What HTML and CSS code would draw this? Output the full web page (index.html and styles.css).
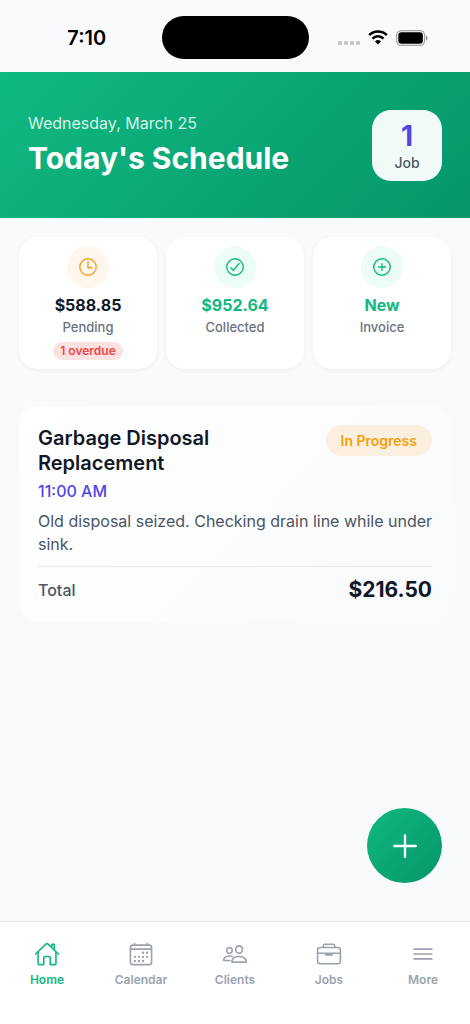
FILE: index.html
```html
<!DOCTYPE html>
<html lang="en">
<head>
<meta charset="utf-8">
<meta name="viewport" content="width=device-width, initial-scale=1">
<title>Today's Schedule</title>
<link rel="stylesheet" href="styles.css">
</head>
<body>
<div class="app">
  <div class="status-bar">
    <time class="clock">7:10</time>
    <div class="island"></div>
    <div class="indicators">
      <span class="signal"><i></i><i></i><i></i><i></i></span>
      <svg class="wifi" viewBox="0 0 20 15" aria-label="Wi-Fi">
        <path d="M1.2 5.2a12.400 12.400 0 0 1 17.600 0" fill="none" stroke="#000" stroke-width="2.6"/>
        <path d="M4.500 8.600a7.800 7.800 0 0 1 11 0" fill="none" stroke="#000" stroke-width="2.5"/>
        <path d="M10 14.6 7 11.5a4.3 4.3 0 0 1 6 0z"/>
      </svg>
      <svg class="battery" viewBox="0 0 32 16" aria-label="Battery">
        <rect x="0.6" y="0.6" width="28" height="14.8" rx="4.6" fill="none" stroke="#a3a0a6" stroke-width="1.2"/>
        <rect x="2.3" y="2.3" width="24.6" height="11.4" rx="3.2"/>
        <path d="M30 5.5c2 .8 2 4.2 0 5z" fill="#8f8c92"/>
      </svg>
    </div>
  </div>

  <header class="hero">
    <div class="hero-text">
      <p class="date">Wednesday, March 25</p>
      <h1 class="title">Today's Schedule</h1>
    </div>
    <div class="job-count">
      <strong class="job-number">1</strong>
      <span class="job-label">Job</span>
    </div>
  </header>

  <main class="content">
    <section class="stats">
      <button class="stat" type="button">
        <span class="stat-icon amber">
          <svg viewBox="0 0 512 512"><path d="M256 64C150 64 64 150 64 256s86 192 192 192 192-86 192-192S362 64 256 64z"/><path d="M256 128v144h96"/></svg>
        </span>
        <span class="stat-value">$588.85</span>
        <span class="stat-label">Pending</span>
        <span class="overdue">1 overdue</span>
      </button>
      <button class="stat" type="button">
        <span class="stat-icon green">
          <svg viewBox="0 0 512 512"><path d="M448 256c0-106-86-192-192-192S64 150 64 256s86 192 192 192 192-86 192-192z"/><path d="M352 176 217.600 336 160 272"/></svg>
        </span>
        <span class="stat-value positive">$952.64</span>
        <span class="stat-label">Collected</span>
      </button>
      <button class="stat" type="button">
        <span class="stat-icon green">
          <svg viewBox="0 0 512 512"><path d="M448 256c0-106-86-192-192-192S64 150 64 256s86 192 192 192 192-86 192-192z"/><path d="M256 176v160M336 256H176"/></svg>
        </span>
        <span class="stat-value positive">New</span>
        <span class="stat-label">Invoice</span>
      </button>
    </section>

    <article class="job">
      <div class="job-head">
        <div class="job-heading">
          <h2 class="job-title">Garbage Disposal Replacement</h2>
          <time class="job-time">11:00 AM</time>
        </div>
        <span class="job-status">In Progress</span>
      </div>
      <p class="job-note">Old disposal seized. Checking drain line while under sink.</p>
      <div class="job-total">
        <span class="total-label">Total</span>
        <strong class="total-value">$216.50</strong>
      </div>
    </article>
  </main>

  <button class="fab" type="button" aria-label="Add job">
    <svg viewBox="0 0 512 512"><path d="M256 112v288M400 256H112"/></svg>
  </button>

  <nav class="tabs">
    <a class="tab active" href="#home">
      <svg viewBox="0 0 512 512"><path d="M80 212v236a16 16 0 0 0 16 16h96V328a24 24 0 0 1 24-24h80a24 24 0 0 1 24 24v136h96a16 16 0 0 0 16-16V212"/><path d="M480 256 266.890 52c-5-5.280-16.690-5.340-21.780 0L32 256M400 179V64h-48v69"/></svg>
      Home
    </a>
    <a class="tab" href="#calendar">
      <svg viewBox="0 0 512 512"><rect x="48" y="80" width="416" height="384" rx="48"/><path d="M128 48v32M384 48v32M464 160H48"/><g class="dots"><circle cx="296" cy="232" r="24"/><circle cx="376" cy="232" r="24"/><circle cx="296" cy="312" r="24"/><circle cx="376" cy="312" r="24"/><circle cx="136" cy="312" r="24"/><circle cx="216" cy="312" r="24"/><circle cx="136" cy="392" r="24"/><circle cx="216" cy="392" r="24"/><circle cx="296" cy="392" r="24"/></g></svg>
      Calendar
    </a>
    <a class="tab" href="#clients">
      <svg viewBox="0 0 512 512"><path d="M402 168c-2.930 40.670-33.100 72-66 72s-63.120-31.320-66-72c-3-42.310 26.370-72 66-72s69 30.460 66 72z"/><path d="M336 304c-65.170 0-127.840 32.370-143.540 95.410-2.080 8.340 3.150 16.590 11.720 16.590h263.650c8.570 0 13.770-8.250 11.720-16.590C463.850 335.360 401.180 304 336 304z"/><path d="M200 185.940c-2.340 32.480-26.720 58.060-53 58.060s-50.700-25.570-53-58.060C91.610 152.150 115.340 128 147 128s55.390 24.770 53 57.940z"/><path d="M206 306c-18.050-8.270-37.930-11.450-59-11.450-52 0-102.100 25.850-114.650 76.200-1.650 6.660 2.530 13.250 9.370 13.250H154"/></svg>
      Clients
    </a>
    <a class="tab" href="#jobs">
      <svg viewBox="0 0 512 512"><rect x="32" y="128" width="448" height="320" rx="48"/><path d="M144 128V96a32 32 0 0 1 32-32h160a32 32 0 0 1 32 32v32M480 240H32M320 240v24a8 8 0 0 1-8 8H200a8 8 0 0 1-8-8v-24"/></svg>
      Jobs
    </a>
    <a class="tab" href="#more">
      <svg viewBox="0 0 512 512"><path d="M80 160h352M80 256h352M80 352h352"/></svg>
      More
    </a>
  </nav>
</div>
</body>
</html>
```

FILE: styles.css
```css
* {
  box-sizing: border-box;
}

body {
  margin: 0;
  background: #f9fafc;
  color: #111827;
  font-family: Inter, "Liberation Sans", sans-serif;
}

h1,
h2,
p {
  margin: 0;
}

button {
  border: 0;
  font: inherit;
  color: inherit;
}

svg {
  flex: none;
}

.app {
  position: relative;
  display: flex;
  flex-direction: column;
  min-height: 100vh;
}

.status-bar {
  display: grid;
  grid-template-columns: 1fr 147px 1fr;
  align-items: center;
  height: 72px;
  padding-top: 3px;
}

.clock {
  padding-top: 1px;
  padding-left: 12px;
  color: #000;
  font-size: 20px;
  font-weight: 600;
  text-align: center;
}

.island {
  height: 43px;
  border-radius: 22px;
  background: #000;
}

.indicators {
  display: flex;
  align-items: center;
  justify-content: center;
  gap: 8px;
  padding-right: 12px;
}

.signal {
  display: flex;
  gap: 2px;
  padding-top: 10px;
}

.signal i {
  width: 4px;
  height: 4px;
  border-radius: 1px;
  background: #c8c8cb;
}

.wifi {
  width: 20px;
  height: 15px;
}

.battery {
  width: 32px;
  height: 16px;
}

.hero {
  display: flex;
  align-items: center;
  justify-content: space-between;
  height: 146px;
  padding: 0 28px;
  background: linear-gradient(135deg, #10b981, #059669);
  color: #fff;
}

.date {
  color: rgba(255, 255, 255, 0.85);
  font-size: 16px;
  line-height: 20px;
}

.title {
  padding-top: 5px;
  font-size: 30px;
  line-height: 40px;
  font-weight: 700;
}

.job-count {
  display: flex;
  flex-direction: column;
  align-items: center;
  justify-content: center;
  width: 70px;
  height: 71px;
  padding-top: 2px;
  border-radius: 19px;
  background: rgba(255, 255, 255, 0.95);
}

.job-number {
  color: #4f46e5;
  font-size: 28px;
  line-height: 34px;
  font-weight: 700;
}

.job-label {
  color: #4b5563;
  font-size: 14px;
  line-height: 20px;
  font-weight: 500;
}

.content {
  display: flex;
  flex: 1;
  flex-direction: column;
  gap: 37px;
  padding: 19px;
}

.stats {
  display: grid;
  grid-template-columns: repeat(3, 1fr);
  gap: 9px;
}

.stat {
  display: flex;
  flex-direction: column;
  align-items: center;
  justify-content: flex-start;
  min-height: 132px;
  padding: 9px;
  border-radius: 19px;
  background: #fff;
  box-shadow: 0 1px 4px rgba(15, 23, 42, 0.05);
}

.stat-icon {
  display: grid;
  place-items: center;
  width: 42px;
  height: 42px;
  margin-bottom: 7px;
  border-radius: 50%;
}

.stat-icon svg {
  width: 22px;
  height: 22px;
  fill: none;
  stroke: currentColor;
  stroke-width: 32;
  stroke-linecap: round;
  stroke-linejoin: round;
}

.amber {
  background: #fff7ed;
  color: #f0a020;
}

.green {
  background: #ecfdf5;
  color: #10b981;
}

.stat-value {
  font-size: 16px;
  line-height: 20px;
  font-weight: 700;
}

.positive {
  color: #10b981;
}

.stat-label {
  padding-top: 3px;
  color: #6b7280;
  font-size: 13px;
  line-height: 18px;
  font-weight: 500;
}

.overdue {
  margin-top: 6px;
  padding: 0 7px;
  border-radius: 9px;
  background: #fee2e2;
  color: #ef4444;
  font-size: 12px;
  line-height: 18px;
  font-weight: 600;
}

.job {
  padding: 19px;
  border-radius: 19px;
  background: linear-gradient(135deg, #fff, #f9fafc);
}

.job-head {
  display: flex;
  align-items: flex-start;
  justify-content: space-between;
  gap: 12px;
}

.job-title {
  padding-top: 1px;
  font-size: 20px;
  line-height: 25px;
  font-weight: 600;
}

.job-time {
  display: block;
  padding-top: 5px;
  color: #4f46e5;
  font-size: 16px;
  line-height: 20px;
  font-weight: 500;
}

.job-status {
  flex: none;
  padding: 0 15px;
  border-radius: 16px;
  background: #fbf0df;
  color: #f59e0b;
  font-size: 14px;
  line-height: 31px;
  font-weight: 600;
}

.job-note {
  margin-right: -6px;
  padding: 9px 0 10px;
  color: #4b5563;
  font-size: 16px;
  line-height: 23px;
}

.job-total {
  display: flex;
  align-items: center;
  justify-content: space-between;
  padding-top: 9px;
  border-top: 1px solid #e5e7eb;
}

.total-label {
  color: #4b5563;
  font-size: 16px;
  font-weight: 500;
}

.total-value {
  font-size: 21px;
  line-height: 27px;
  font-weight: 700;
}

.fab {
  position: absolute;
  right: 28px;
  bottom: 141px;
  display: grid;
  place-items: center;
  width: 75px;
  height: 75px;
  padding: 0;
  border-radius: 50%;
  background: linear-gradient(135deg, #10b981, #059669);
}

.fab svg {
  width: 38px;
  height: 38px;
  fill: none;
  stroke: #fff;
  stroke-width: 32;
  stroke-linecap: round;
}

.tabs {
  display: grid;
  grid-template-columns: repeat(5, 1fr);
  height: 103px;
  padding-top: 19px;
  border-top: 1px solid #e2e5e9;
  background: #fff;
}

.tab {
  display: flex;
  flex-direction: column;
  align-items: center;
  gap: 5px;
  color: #9ca3af;
  font-size: 12px;
  line-height: 16px;
  font-weight: 600;
  text-decoration: none;
}

.tab svg {
  width: 26px;
  height: 26px;
  fill: none;
  stroke: currentColor;
  stroke-width: 32;
  stroke-linecap: round;
  stroke-linejoin: round;
}

.tab .dots {
  fill: currentColor;
  stroke: none;
}

.active {
  color: #10b981;
}
```
